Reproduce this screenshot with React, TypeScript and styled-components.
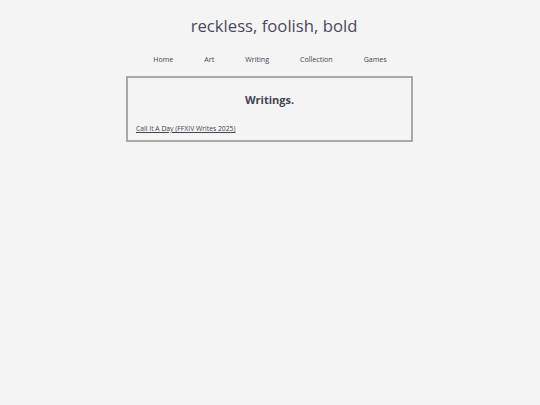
import React from "react";
import styled, { createGlobalStyle } from "styled-components";

const Global = createGlobalStyle`
  html, body { margin: 0; padding: 0; background: #f4f4f4; }
  body { font-family: "Open Sans", "Liberation Sans", sans-serif; color: #444450; }
`;

const Page = styled.div`
  display: flex;
  flex-direction: column;
  align-items: center;
  padding-top: 13px;
`;

const Title = styled.h1`
  margin: 0 0 0 8px;
  font-size: 16.7px;
  font-weight: 400;
  color: #4a4a5a;
  line-height: 26px;
`;

const Nav = styled.nav`
  display: flex;
  gap: 31px;
  margin-top: 15px;
`;

const NavLink = styled.a`
  font-size: 7.1px;
  color: #444450;
  text-decoration: none;
  line-height: 10px;
`;

const Box = styled.section`
  box-sizing: border-box;
  width: 287px;
  height: 66px;
  margin-top: 12px;
  margin-left: -1px;
  border: 2px solid #a8a8a8;
  padding: 14px 8px 0 8px;
  display: flex;
  flex-direction: column;
`;

const Heading = styled.h2`
  margin: 0;
  text-align: center;
  font-size: 11px;
  font-weight: 700;
  color: #444450;
  line-height: 16px;
`;

const Entry = styled.a`
  margin-top: 16px;
  font-size: 6.8px;
  color: #444450;
  text-decoration: underline;
  line-height: 10px;
`;

export default function App() {
  return (
    <>
      <Global />
      <Page>
        <Title>reckless, foolish, bold</Title>
        <Nav>
          <NavLink>Home</NavLink>
          <NavLink>Art</NavLink>
          <NavLink>Writing</NavLink>
          <NavLink>Collection</NavLink>
          <NavLink>Games</NavLink>
        </Nav>
        <Box>
          <Heading>Writings.</Heading>
          <Entry>Call It A Day (FFXIV Writes 2025)</Entry>
        </Box>
      </Page>
    </>
  );
}
